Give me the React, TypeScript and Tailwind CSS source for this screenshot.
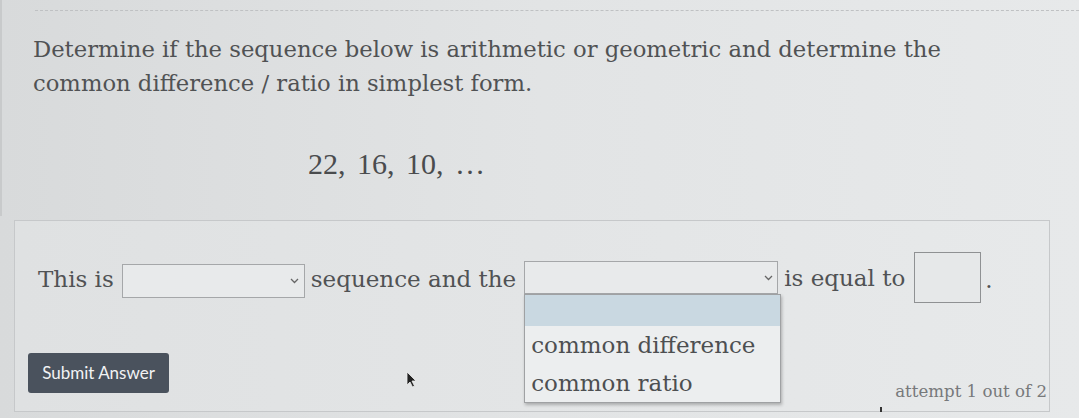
import React from "react";

const serif = { fontFamily: '"DejaVu Serif", "Liberation Serif", serif' };
const mathSerif = { fontFamily: '"Liberation Serif", "DejaVu Serif", serif' };

function Chevron({ className = "" }: { className?: string }) {
  return (
    <svg width="9" height="6" viewBox="0 0 9 6" className={className}>
      <path d="M1 1 L4.5 4.5 L8 1" fill="none" stroke="#666" strokeWidth="1.3" />
    </svg>
  );
}

export default function App() {
  return (
    <div
      className="relative h-[418px] w-[1079px] overflow-hidden bg-gradient-to-r from-[#d8dadb] via-[#e2e4e5] to-[#e7e9ea] text-[#505254]"
      style={serif}
    >
      <div className="border-l-[2px] border-[#c8cacb] h-[216px] flex flex-col">
        <div className="ml-[33px] mt-[10px] border-t border-dashed border-[#bfc1c3]" />
        <div className="pl-[31px] pt-[21px] text-[22.7px] leading-[34px]">
          <p>Determine if the sequence below is arithmetic or geometric and determine the</p>
          <p>common difference / ratio in simplest form.</p>
        </div>
        <div
          className="pl-[306px] pt-[47px] text-[30px] leading-[34px] text-[#4a4c4e] [word-spacing:4px]"
          style={mathSerif}
        >
          22, 16, 10, …
        </div>
      </div>

      <div className="relative ml-[14px] mt-[4px] h-[192px] w-[1036px] border border-[#c6c8ca] bg-gradient-to-r from-[#dfe1e2] to-[#e7e9ea]">
        <div className="flex items-center pl-[23px] pt-[31px] text-[23px]">
          <span className="pt-[4px]">This is</span>
          <div className="ml-[8px] mt-[6px] flex h-[34px] w-[183px] items-center justify-end border border-[#a5a7a9] bg-[#e8eaeb] pr-[5px]">
            <Chevron />
          </div>
          <span className="ml-[6px] pt-[4px]">sequence and the</span>
          <div className="relative ml-[8px] flex h-[33px] w-[254px] items-center justify-end border border-[#a5a7a9] bg-[#e8eaeb] pr-[4px]">
            <Chevron />
            <div className="absolute left-[-1px] top-[32px] z-10 w-[257px] border border-[#9fa1a3] bg-[#eceeef] shadow-[1px_2px_3px_rgba(0,0,0,0.25)]">
              <div className="h-[31px] bg-[#c9d8e1]" />
              <div className="h-[38px] pl-[6px] pt-[2px] text-[23px] leading-[34px] text-[#4d4f51]">
                common difference
              </div>
              <div className="h-[38px] pl-[6px] pt-[2px] text-[23px] leading-[34px] text-[#4d4f51]">
                common ratio
              </div>
            </div>
          </div>
          <span className="ml-[6px] pt-[2px]">is equal to</span>
          <div className="ml-[9px] h-[51px] w-[67px] border border-[#8f9193] bg-[#e6e8e9]" />
          <span className="ml-[4px] pt-[6px]">.</span>
        </div>

        <div className="flex items-end justify-between pl-[13px] pr-[2px] pt-[50px]">
          <button
            className="h-[40px] w-[141px] rounded-[3px] bg-[#4a525d] text-[17px] text-[#f2f3f4]"
            style={{ fontFamily: 'Lato, "Open Sans", sans-serif' }}
          >
            Submit Answer
          </button>
          <span className="translate-y-[12px] text-[16.6px] text-[#77797b]">attempt 1 out of 2</span>
        </div>

        <svg
          className="absolute left-[390px] top-[150px]"
          width="14"
          height="18"
          viewBox="0 0 14 18"
        >
          <path d="M2 1 L2 14 L5 11 L7.5 16 L9.5 15 L7 10 L11 10 Z" fill="#222" stroke="#eee" strokeWidth="0.8" />
        </svg>
        <div className="absolute left-[865px] top-[186px] h-[5px] w-[2px] bg-[#333]" />
      </div>
    </div>
  );
}
